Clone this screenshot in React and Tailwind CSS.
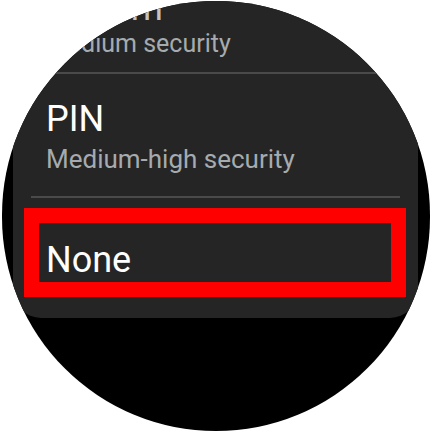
import React from 'react';

const font = { fontFamily: 'Roboto, "Noto Sans", sans-serif' };

function Separator() {
  return <div className="mx-[18px] h-[2px] bg-[#4a4a4a]" />;
}

export default function App() {
  return (
    <div className="w-[432px] h-[432px] bg-white flex items-center justify-center" style={font}>
      <div className="w-[428px] h-[430px] rounded-full bg-black overflow-hidden">
        <div className="-mt-[11px] ml-[11px] mr-[12px] bg-[#252525] rounded-b-[28px] pb-[21px]">
          {/* Pattern */}
          <div className="px-[33px]">
            <div className="text-[36px] leading-[36px] text-[#c4c4c4]">Pattern</div>
            <div className="mt-[5px] text-[25px] leading-[25px] text-[#a6abaf]">Medium security</div>
          </div>
          <div className="mt-[16px]">
            <Separator />
          </div>

          {/* PIN */}
          <div className="mt-[27px] px-[33px]">
            <div className="text-[36px] leading-[36px] text-white">PIN</div>
            <div className="mt-[9px] text-[26px] leading-[26px] text-[#a6abaf]">Medium-high security</div>
          </div>
          <div className="mt-[24px]">
            <Separator />
          </div>

          {/* None, highlighted */}
          <div className="mt-[10px] ml-[11px] mr-[12px] border-[15px] border-[#fe0000] h-[89px] pt-[19px] pl-[7px]">
            <div className="text-[36px] leading-[36px] text-white">None</div>
          </div>
        </div>
      </div>
    </div>
  );
}
